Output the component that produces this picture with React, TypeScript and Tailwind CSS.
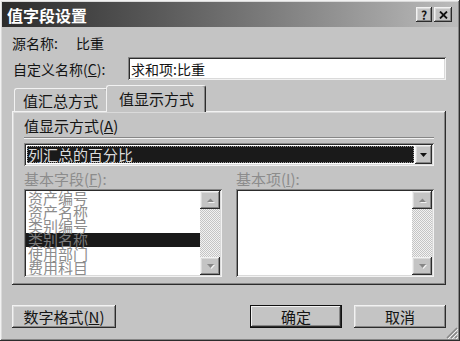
const raised =
  "shadow-[inset_-1px_-1px_0_#2c2c2c,inset_1px_1px_0_#f2f2f2,inset_-2px_-2px_0_#868686,inset_2px_2px_0_#dadada]";
const sunken =
  "shadow-[inset_1px_1px_0_#868686,inset_-1px_-1px_0_#f2f2f2,inset_2px_2px_0_#2c2c2c,inset_-2px_-2px_0_#dadada]";

function Arrow({ up, disabled }: { up?: boolean; disabled?: boolean }) {
  const pts = up ? "0,4 3.5,0.5 7,4" : "0,0 7,0 3.5,4";
  return (
    <svg width="9" height="6" viewBox="-1 -1 9 6">
      {disabled && <polygon points={pts} transform="translate(1,1)" fill="#f2f2f2" />}
      <polygon points={pts} fill={disabled ? "#868686" : "#111"} />
    </svg>
  );
}

function ScrollBar() {
  return (
    <div className="flex w-[20px] flex-col">
      <div className={`flex h-[18px] items-center justify-center bg-[#c4c4c4] ${raised}`}>
        <Arrow up disabled />
      </div>
      <div className="flex-1 bg-[image:repeating-conic-gradient(#c4c4c4_0_25%,#f2f2f2_0_50%)] bg-[length:2px_2px]" />
      <div className={`flex h-[18px] items-center justify-center bg-[#c4c4c4] ${raised}`}>
        <Arrow disabled />
      </div>
    </div>
  );
}

const fields = ["资产编号", "资产名称", "类别编号", "类别名称", "使用部门", "费用科目"];

export default function App() {
  return (
    <div
      className={`relative flex h-[341px] w-[460px] flex-col bg-[#c4c4c4] p-[2px] font-['Noto_Sans_CJK_SC',sans-serif] text-[#141414] ${raised}`}
    >
      {/* title bar */}
      <div className="flex h-[25px] items-center justify-between bg-gradient-to-r from-[#2c2c2c] to-[#bcbcbc] pl-[5px] pr-[6px]">
        <span className="text-[16px] font-bold leading-none text-white">值字段设置</span>
        <div className="flex gap-[1px]">
          <div className={`flex h-[15px] w-[16px] items-center justify-center bg-[#c4c4c4] text-[12px] font-bold leading-none ${raised}`}>
            ?
          </div>
          <div className={`ml-[1px] flex h-[15px] w-[18px] items-center justify-center bg-[#c4c4c4] ${raised}`}>
            <svg width="9" height="8" viewBox="0 0 9 8">
              <path d="M1 0.5 L8 7.5 M8 0.5 L1 7.5" stroke="#111" strokeWidth="1.8" />
            </svg>
          </div>
        </div>
      </div>

      <div className="flex flex-1 flex-col pl-[10px] pr-[12px]">
        <div className="mt-[8px] flex h-[16px] items-center text-[14px] leading-none">
          <span className="w-[64px]">源名称:</span>
          <span>比重</span>
        </div>

        <div className="mt-[6px] flex h-[23px] items-center text-[14px]">
          <span className="w-[116px] pl-[1px] leading-none">
            自定义名称(<span className="underline">C</span>):
          </span>
          <div className={`flex h-[23px] flex-1 items-center bg-white px-[3px] leading-none ${sunken}`}>
            求和项:比重
          </div>
        </div>

        {/* tabs */}
        <div className="mt-[5px] flex h-[26px] items-end pl-[2px] text-[15px] leading-none">
          <div className="flex h-[23px] w-[94px] items-center rounded-t-[3px] border-l border-t border-r border-l-[#f2f2f2] border-t-[#f2f2f2] border-r-[#2c2c2c] pl-[8px] shadow-[inset_-1px_0_0_#868686]">
            值汇总方式
          </div>
          <div className="relative z-10 -mb-[1px] -ml-[2px] flex h-[27px] w-[100px] items-center rounded-t-[3px] border-l border-t border-r border-l-[#f2f2f2] border-t-[#f2f2f2] border-r-[#2c2c2c] bg-[#c4c4c4] pb-[2px] pl-[12px] shadow-[inset_-1px_0_0_#868686]">
            值显示方式
          </div>
        </div>

        {/* panel */}
        <div className={`flex flex-col px-[12px] pb-[11px] pt-[6px] text-[15px] ${raised}`}>
          <div className="flex h-[16px] items-center leading-none">
            值显示方式(<span className="underline">A</span>)
          </div>
          <div className="mt-[4px] h-[2px] border-t border-b border-t-[#868686] border-b-[#f2f2f2]" />
          <div className={`mt-[4px] flex h-[23px] bg-white p-[2px] ${sunken}`}>
            <div className="m-[1px] flex flex-1 items-center bg-[#1a1a1a] pl-[1px] leading-none text-[#dcdcdc] outline outline-1 outline-dotted outline-[#9a9a9a] -outline-offset-1">
              列汇总的百分比
            </div>
            <div className={`flex w-[17px] items-center justify-center bg-[#c4c4c4] ${raised}`}>
              <Arrow />
            </div>
          </div>

          <div className="mt-[4px] grid h-[16px] grid-cols-2 gap-[14px] leading-none text-[#8c8c8c]">
            <span className="flex items-center">
              基本字段(<span className="underline">F</span>):
            </span>
            <span className="flex items-center">
              基本项(<span className="underline">I</span>):
            </span>
          </div>

          <div className="mt-[3px] grid h-[85px] grid-cols-2 gap-[14px]">
            <div className={`flex bg-white p-[2px] ${sunken}`}>
              <div className="flex-1 overflow-hidden">
                {fields.map((f, i) => (
                  <div
                    key={f}
                    className={`h-[14px] pl-[2px] text-[15px] leading-[14px] ${
                      i === 3 ? "bg-[#1a1a1a] text-[#7a7a7a]" : "text-[#8c8c8c]"
                    }`}
                  >
                    {f}
                  </div>
                ))}
              </div>
              <ScrollBar />
            </div>
            <div className={`flex bg-white p-[2px] ${sunken}`}>
              <div className="flex-1" />
              <ScrollBar />
            </div>
          </div>
        </div>

        {/* buttons */}
        <div className="mt-[20px] flex h-[23px] text-[15px] leading-none">
          <div className={`flex w-[104px] items-center justify-center bg-[#c4c4c4] ${raised}`}>
            数字格式(<span className="underline">N</span>)
          </div>
          <div className="ml-auto flex w-[92px] items-center justify-center border border-[#111] bg-[#c4c4c4] shadow-[inset_-1px_-1px_0_#2c2c2c,inset_1px_1px_0_#f2f2f2,inset_-2px_-2px_0_#868686]">
            确定
          </div>
          <div className={`ml-[12px] flex w-[92px] items-center justify-center bg-[#c4c4c4] ${raised}`}>
            取消
          </div>
        </div>
      </div>

      {/* resize grip */}
      <svg className="absolute bottom-[2px] right-[2px]" width="12" height="12" viewBox="0 0 12 12">
        <path d="M11 1 L1 11 M11 5 L5 11 M11 9 L9 11" stroke="#868686" strokeWidth="1.5" />
        <path d="M12 2 L2 12 M12 6 L6 12 M12 10 L10 12" stroke="#f2f2f2" strokeWidth="1" />
      </svg>
    </div>
  );
}
